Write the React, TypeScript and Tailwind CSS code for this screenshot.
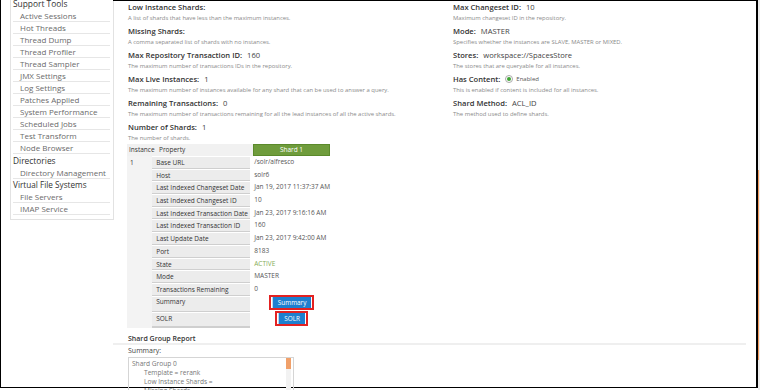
const tools = [
  "Active Sessions",
  "Hot Threads",
  "Thread Dump",
  "Thread Profiler",
  "Thread Sampler",
  "JMX Settings",
  "Log Settings",
  "Patches Applied",
  "System Performance",
  "Scheduled Jobs",
  "Test Transform",
  "Node Browser",
];

const leftInfo = [
  { label: "Low Instance Shards:", value: "", desc: "A list of shards that have less than the maximum instances." },
  { label: "Missing Shards:", value: "", desc: "A comma separated list of shards with no instances." },
  { label: "Max Repository Transaction ID:", value: "160", desc: "The maximum number of transactions IDs in the repository." },
  { label: "Max Live Instances:", value: "1", desc: "The maximum number of instances available for any shard that can be used to answer a query." },
  { label: "Remaining Transactions:", value: "0", desc: "The maximum number of transactions remaining for all the lead instances of all the active shards." },
  { label: "Number of Shards:", value: "1", desc: "The number of shards." },
];

const rightInfo = [
  { label: "Max Changeset ID:", value: "10", desc: "Maximum changeset ID in the repository." },
  { label: "Mode:", value: "MASTER", desc: "Specifies whether the instances are SLAVE, MASTER or MIXED." },
  { label: "Stores:", value: "workspace://SpacesStore", desc: "The stores that are queryable for all instances." },
  { label: "Has Content:", value: "radio", desc: "This is enabled if content is included for all instances." },
  { label: "Shard Method:", value: "ACL_ID", desc: "The method used to define shards." },
];

const rows = [
  ["Base URL", "/solr/alfresco"],
  ["Host", "solr6"],
  ["Last Indexed Changeset Date", "Jan 19, 2017 11:37:37 AM"],
  ["Last Indexed Changeset ID", "10"],
  ["Last Indexed Transaction Date", "Jan 23, 2017 9:16:16 AM"],
  ["Last Indexed Transaction ID", "160"],
  ["Last Update Date", "Jan 23, 2017 9:42:00 AM"],
  ["Port", "8183"],
  ["State", "ACTIVE"],
  ["Mode", "MASTER"],
  ["Transactions Remaining", "0"],
];

function InfoBlock({ label, value, desc }: { label: string; value: string; desc: string }) {
  return (
    <div className="h-[24px]">
      <div className="flex items-center gap-[5px] h-[10px] text-[7.6px] leading-[10px] text-[#333]">
        <span className="font-semibold">{label}</span>
        {value === "radio" ? (
          <span className="flex items-center gap-[3px] font-normal">
            <span className="w-[8px] h-[8px] rounded-full border border-[#aaa] bg-white flex items-center justify-center">
              <span className="w-[4px] h-[4px] rounded-full bg-[#3fa535]" />
            </span>
            <span className="text-[6px] text-[#555]">Enabled</span>
          </span>
        ) : (
          value && <span className="font-normal text-[#444]">{value}</span>
        )}
      </div>
      <div className="mt-[1px] text-[5.9px] leading-[10px] text-[#8a8a8a] whitespace-nowrap">{desc}</div>
    </div>
  );
}

function ActionButton({ label }: { label: string }) {
  return (
    <button className="h-[15px] px-[1px] border-2 border-[#e32222] bg-white">
      <span className="block h-[11px] px-[5px] bg-[#1e7fcf] text-white text-[6.4px] leading-[11px] border-l border-l-[#b9d8f0]">
        {label}
      </span>
    </button>
  );
}

export default function App() {
  return (
    <div className="relative w-[760px] h-[390px] overflow-hidden bg-white" style={{ fontFamily: '"Open Sans", "Noto Sans", sans-serif' }}>
      <div className="flex h-[388px] w-[758px] border-l border-b border-r-2 border-black">
        {/* sidebar */}
        <div className="w-[112px] shrink-0 pl-[9px]">
          <div className="-mt-[2px] w-[104px] h-[222px] border border-[#e2e2e2] border-t-0 bg-white pl-[2px] pr-[3px]">
            <div className="text-[8.4px] leading-[12px] text-[#333]">Support Tools</div>
            <ul>
              {tools.map((t) => (
                <li key={t} className="h-[12px] border-b border-[#e6e6e6] pl-[7px] text-[8px] leading-[12px] text-[#6a6a6a] whitespace-nowrap">
                  {t}
                </li>
              ))}
            </ul>
            <div className="text-[8.4px] leading-[13px] text-[#333]">Directories</div>
            <div className="h-[12px] border-b border-[#e6e6e6] pl-[7px] text-[8px] leading-[12px] text-[#6a6a6a] whitespace-nowrap">Directory Management</div>
            <div className="text-[8.2px] leading-[12px] text-[#333]">Virtual File Systems</div>
            <div className="h-[12px] border-b border-[#e6e6e6] pl-[7px] text-[8px] leading-[12px] text-[#6a6a6a]">File Servers</div>
            <div className="h-[12px] border-b border-[#e6e6e6] pl-[7px] text-[8px] leading-[12px] text-[#6a6a6a]">IMAP Service</div>
          </div>
        </div>

        {/* main */}
        <div className="flex-1 border-t border-black pt-[1px]">
          <div className="flex pl-[15px]">
            <div className="w-[325px]">
              {leftInfo.map((i) => (
                <InfoBlock key={i.label} {...i} />
              ))}
            </div>
            <div>
              {rightInfo.map((i) => (
                <InfoBlock key={i.label} {...i} />
              ))}
            </div>
          </div>

          {/* shard table */}
          <div className="-mt-[2px] ml-[14px] w-[203px] text-[6.5px] text-[#333]">
            <div className="flex h-[12px] leading-[12px]">
              <div className="w-[126px] flex bg-[#f1f1f1]">
                <div className="w-[28px] pl-[2px]">Instance</div>
                <div className="pl-[4px]">Property</div>
              </div>
              <div className="flex-1 bg-[#6f9c3c] border border-[#5b8a2b] text-center text-white leading-[10px]">Shard 1</div>
            </div>
            <div className="flex">
              <div className="w-[28px] bg-[#f3f3f3] pl-[3px] pt-[1px] leading-[12px]">1</div>
              <div className="flex-1">
                {rows.map(([p, v]) => (
                  <div key={p} className="flex h-[12.7px]">
                    <div className="w-[98px] shrink-0 bg-[#ececec] border-b border-[#cfcfcf] border-t border-t-white pl-[4px] leading-[11px] whitespace-nowrap">{p}</div>
                    <div className={`flex-1 pl-[4px] leading-[12px] whitespace-nowrap ${v === "ACTIVE" ? "text-[#86ad57]" : "text-[#555]"}`}>{v}</div>
                  </div>
                ))}
                <div className="flex h-[16px]">
                  <div className="w-[98px] shrink-0 bg-[#ececec] border-b border-[#cfcfcf] border-t border-t-white pl-[4px] leading-[10px]">Summary</div>
                  <div className="flex-1 flex justify-center items-start pl-[3px]">
                    <div className="-mt-[1px]">
                      <ActionButton label="Summary" />
                    </div>
                  </div>
                </div>
                <div className="flex h-[16px]">
                  <div className="w-[98px] shrink-0 bg-[#ececec] border-b-2 border-[#cfcfcf] border-t border-t-white pl-[4px] leading-[12px]">SOLR</div>
                  <div className="flex-1 flex justify-center items-start pl-[3px]">
                    <div className="-mt-[1px]">
                      <ActionButton label="SOLR" />
                    </div>
                  </div>
                </div>
              </div>
            </div>
          </div>

          {/* shard group report */}
          <div className="mt-[5px] mr-[10px] border-b-2 border-[#efefef] pl-[15px] h-[12px] text-[7px] leading-[12px] font-semibold text-[#333]">
            Shard Group Report
          </div>
          <div className="pl-[15px] mt-[1px] text-[7px] leading-[10px] text-[#444]">Summary:</div>
          <div className="ml-[15px] mt-[1px] w-[166px] h-[40px] border border-[#d5d5d5] flex">
            <div className="flex-1 pl-[3px] pt-[1px] text-[6.6px] leading-[9px] text-[#777]">
              <div>Shard Group 0</div>
              <div className="pl-[12px]">Template = rerank</div>
              <div className="pl-[12px]">Low Instance Shards =</div>
              <div className="pl-[12px]">Missing Shards =</div>
            </div>
            <div className="w-[5px] mr-[2px] bg-[#f2f2f2]">
              <div className="h-[11px] bg-[#f0a06a]" />
            </div>
          </div>
        </div>
      </div>
      {/* right gutter */}
      <div className="absolute right-0 top-0 w-[2px] h-[390px] bg-[#ececec]">
        <div className="mt-[170px] h-[190px] w-[1px] bg-[#f29a5c]" />
      </div>
    </div>
  );
}
